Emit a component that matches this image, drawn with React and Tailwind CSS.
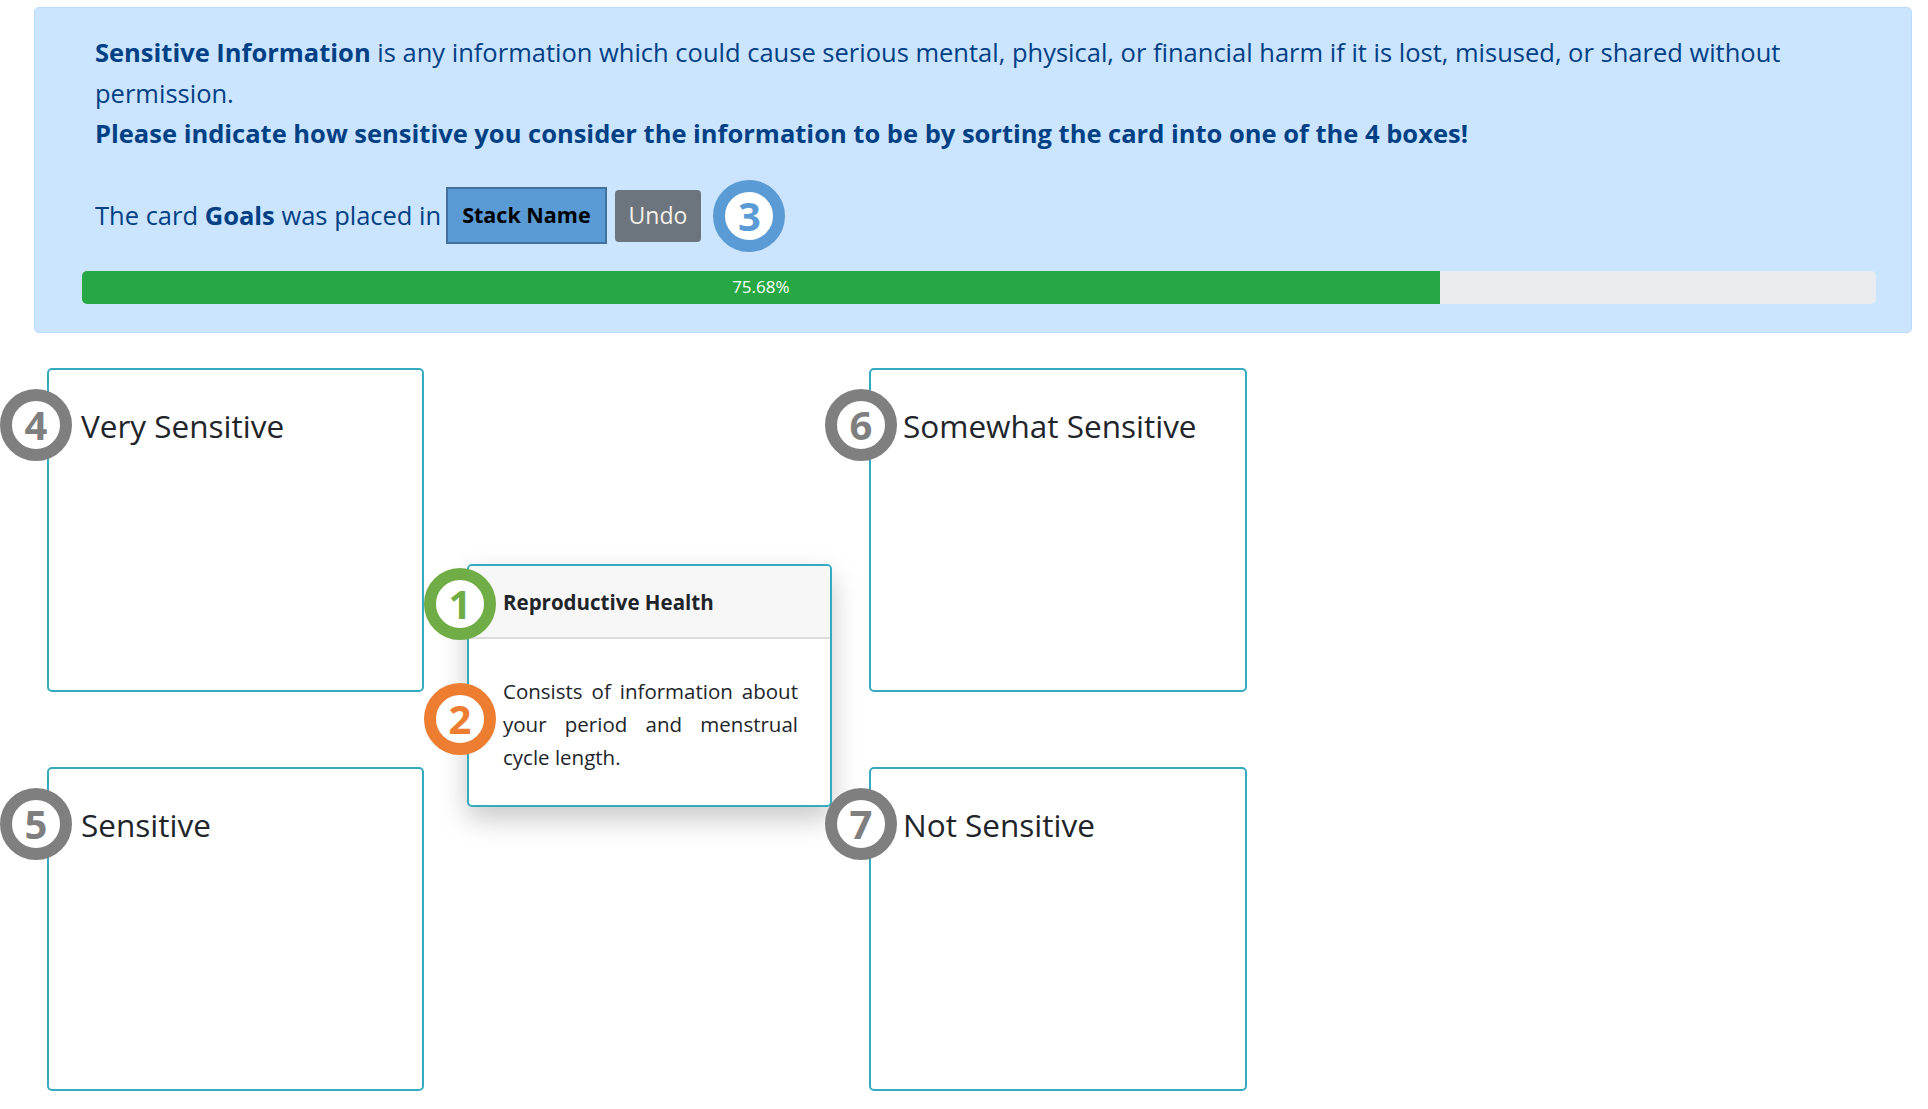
import React from 'react';

const Marker = ({ n, ring, className = '' }) => (
  <div
    className={`flex items-center justify-center w-[72px] h-[72px] rounded-full bg-white border-[12px] font-bold text-[40px] leading-none ${ring} ${className}`}
  >
    {n}
  </div>
);

const Box = ({ title }) => (
  <div className="bg-white border-2 border-[#36abc0] rounded-[5px] pl-[32px] pt-[35px]">
    <h3 className="text-[31.5px] leading-[42px] text-[#212529]">{title}</h3>
  </div>
);

export default function App() {
  return (
    <div className="w-[1928px] h-[1109px] bg-white overflow-hidden font-['Open_Sans',sans-serif]">
      {/* Info alert */}
      <div className="ml-[34px] mt-[7px] w-[1878px] h-[326px] bg-[#cce5ff] border border-[#b8daff] rounded-[5px] text-[#004085]">
        <div className="pl-[60px] pt-[24px] w-[1790px] text-[25.5px] leading-[40.5px]">
          <p>
            <b>Sensitive Information</b>
            <span> is any information which could cause serious mental, physical, or financial harm if it is lost, misused, or shared without permission.</span>
          </p>
          <p className="font-bold">
            Please indicate how sensitive you consider the information to be by sorting the card into one of the 4 boxes!
          </p>
        </div>

        <div className="flex items-center pl-[60px] mt-[26px] text-[25.5px]">
          <span>
            The card <b>Goals</b> was placed in
          </span>
          <button className="ml-[5px] h-[57px] px-[14px] bg-[#5b9bd5] border-2 border-[#41719c] text-black font-bold text-[21.5px]">
            Stack Name
          </button>
          <button className="ml-[8px] h-[52px] px-[14px] bg-[#6c757d] rounded-[4px] text-[#f4efe8] text-[23px]">
            Undo
          </button>
          <Marker n="3" ring="border-[#5b9bd5] text-[#5b9bd5]" className="ml-[12px]" />
        </div>

        <div className="ml-[47px] mt-[19px] w-[1794px] h-[33px] bg-[#e9ecef] rounded-[5px] overflow-hidden flex">
          <div className="w-[75.68%] h-full bg-[#28a745] text-white text-[17px] flex items-center justify-center">
            75.68%
          </div>
        </div>
      </div>

      {/* Sorting boxes */}
      <div className="relative mt-[35px] pl-[47px]">
        <div className="grid grid-cols-[377px_378px] grid-rows-[324px_324px] gap-x-[445px] gap-y-[75px]">
          <Box title="Very Sensitive" />
          <Box title="Somewhat Sensitive" />
          <Box title="Sensitive" />
          <Box title="Not Sensitive" />
        </div>

        {/* Card being sorted */}
        <div className="absolute left-[467px] top-[196px] w-[365px] h-[243px] bg-white border-2 border-[#36abc0] rounded-[5px] shadow-[0_12px_28px_rgba(0,0,0,0.22)] overflow-hidden">
          <div className="h-[73px] bg-[#f7f7f7] border-b-2 border-[#dcdcdc] flex items-center pl-[34px] pt-[2px]">
            <span className="font-bold text-[20.5px] text-[#212529]">Reproductive Health</span>
          </div>
          <p className="pl-[34px] pr-[32px] pt-[36px] text-[20.5px] leading-[33px] text-[#212529] text-justify">
            Consists of information about your period and menstrual cycle length.
          </p>
        </div>

        <Marker n="4" ring="border-[#7f7f7f] text-[#7f7f7f]" className="absolute left-0 top-[21px]" />
        <Marker n="5" ring="border-[#7f7f7f] text-[#7f7f7f]" className="absolute left-0 top-[420px]" />
        <Marker n="6" ring="border-[#7f7f7f] text-[#7f7f7f]" className="absolute left-[825px] top-[21px]" />
        <Marker n="7" ring="border-[#7f7f7f] text-[#7f7f7f]" className="absolute left-[825px] top-[420px]" />
        <Marker n="1" ring="border-[#70ad47] text-[#70ad47]" className="absolute left-[424px] top-[200px]" />
        <Marker n="2" ring="border-[#ed7d31] text-[#ed7d31]" className="absolute left-[424px] top-[315px]" />
      </div>
    </div>
  );
}
